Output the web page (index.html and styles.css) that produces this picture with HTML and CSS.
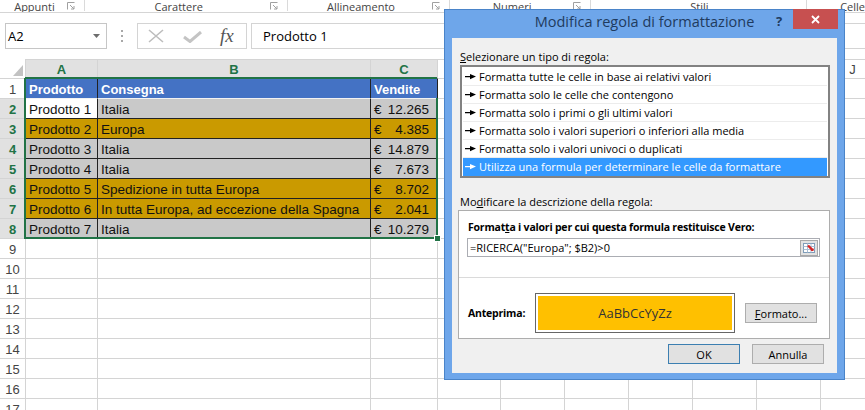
FILE: index.html
```html
<!DOCTYPE html>
<html lang="it">
<head>
<meta charset="utf-8">
<title>Modifica regola di formattazione</title>
<link rel="stylesheet" href="styles.css">
</head>
<body>
<div class="app">
  <div class="ribbon">
    <div class="grp g1"><span class="lbl">Appunti</span><svg class="launch" width="8" height="8" viewBox="0 0 8 8"><path d="M0.5 7.5V0.5H7.5" stroke="#a0a0a0" fill="none"/><path d="M3 3L7 7M7 4V7H4" stroke="#a0a0a0" fill="none"/></svg></div>
    <div class="grp g2"><span class="lbl">Carattere</span><svg class="launch" width="8" height="8" viewBox="0 0 8 8"><path d="M0.5 7.5V0.5H7.5" stroke="#a0a0a0" fill="none"/><path d="M3 3L7 7M7 4V7H4" stroke="#a0a0a0" fill="none"/></svg></div>
    <div class="grp g3"><span class="lbl">Allineamento</span><svg class="launch" width="8" height="8" viewBox="0 0 8 8"><path d="M0.5 7.5V0.5H7.5" stroke="#a0a0a0" fill="none"/><path d="M3 3L7 7M7 4V7H4" stroke="#a0a0a0" fill="none"/></svg></div>
    <div class="grp g4"><span class="lbl">Numeri</span><svg class="launch" width="8" height="8" viewBox="0 0 8 8"><path d="M0.5 7.5V0.5H7.5" stroke="#a0a0a0" fill="none"/><path d="M3 3L7 7M7 4V7H4" stroke="#a0a0a0" fill="none"/></svg></div>
    <div class="grp g5"><span class="lbl">Stili</span></div>
    <div class="grp g6"><span class="lbl">Celle</span></div>
  </div>

  <div class="fbar">
    <div class="namebox"><span>A2</span><svg width="7" height="4" viewBox="0 0 7 4"><path d="M0 0h7L3.5 4z" fill="#6d6d6d"/></svg></div>
    <div class="dots"><i></i><i></i><i></i></div>
    <div class="fxbox">
      <svg class="ico-x" width="18" height="14" viewBox="0 0 18 14"><path d="M2 1L16 13M16 1L2 13" stroke="#bdbdbd" stroke-width="1.6"/></svg>
      <svg class="ico-ok" width="19" height="12" viewBox="0 0 19 12"><path d="M1 6L7 10.5L18 1" stroke="#c4c4c4" stroke-width="3" fill="none"/></svg>
      <span class="fx">fx</span>
    </div>
    <div class="finput">Prodotto 1</div>
  </div>

  <div class="sheet">
    <div class="grid">
      <div class="corner"><svg width="10" height="11" viewBox="0 0 10 11"><path d="M10 0V11H0z" fill="#c2c2c2"/></svg></div>
      <b class="ch s">A</b><b class="ch s">B</b><b class="ch s">C</b><b class="ch"></b><b class="ch"></b><b class="ch"></b><b class="ch"></b><b class="ch"></b><b class="ch"></b><b class="ch">J</b>

      <b class="rh">1</b><div class="t hd a">Prodotto</div><div class="t hd b">Consegna</div><div class="t hd cc">Vendite</div><i class="tr"></i><i></i><i></i><i></i><i></i><i></i><i></i>

      <b class="rh s">2</b><div class="t a act r2">Prodotto 1</div><div class="t b gr r2">Italia</div><div class="t cc gr r2"><span>€</span><span>12.265</span></div><i class="tr"></i><i></i><i></i><i></i><i></i><i></i><i></i>
      <b class="rh s">3</b><div class="t a or">Prodotto 2</div><div class="t b or">Europa</div><div class="t cc or"><span>€</span><span>4.385</span></div><i class="tr"></i><i></i><i></i><i></i><i></i><i></i><i></i>
      <b class="rh s">4</b><div class="t a gr">Prodotto 3</div><div class="t b gr">Italia</div><div class="t cc gr"><span>€</span><span>14.879</span></div><i class="tr"></i><i></i><i></i><i></i><i></i><i></i><i></i>
      <b class="rh s">5</b><div class="t a gr">Prodotto 4</div><div class="t b gr">Italia</div><div class="t cc gr"><span>€</span><span>7.673</span></div><i class="tr"></i><i></i><i></i><i></i><i></i><i></i><i></i>
      <b class="rh s">6</b><div class="t a or">Prodotto 5</div><div class="t b or">Spedizione in tutta Europa</div><div class="t cc or"><span>€</span><span>8.702</span></div><i class="tr"></i><i></i><i></i><i></i><i></i><i></i><i></i>
      <b class="rh s">7</b><div class="t a or">Prodotto 6</div><div class="t b or">In tutta Europa, ad eccezione della Spagna</div><div class="t cc or"><span>€</span><span>2.041</span></div><i class="tr"></i><i></i><i></i><i></i><i></i><i></i><i></i>
      <b class="rh s">8</b><div class="t a gr">Prodotto 7</div><div class="t b gr">Italia</div><div class="t cc gr"><span>€</span><span>10.279</span></div><i class="tr"></i><i></i><i></i><i></i><i></i><i></i><i></i>

      <b class="rh">9</b><i></i><i></i><i></i><i></i><i></i><i></i><i></i><i></i><i></i><i></i>
      <b class="rh">10</b><i></i><i></i><i></i><i></i><i></i><i></i><i></i><i></i><i></i><i></i>
      <b class="rh">11</b><i></i><i></i><i></i><i></i><i></i><i></i><i></i><i></i><i></i><i></i>
      <b class="rh">12</b><i></i><i></i><i></i><i></i><i></i><i></i><i></i><i></i><i></i><i></i>
      <b class="rh">13</b><i></i><i></i><i></i><i></i><i></i><i></i><i></i><i></i><i></i><i></i>
      <b class="rh">14</b><i></i><i></i><i></i><i></i><i></i><i></i><i></i><i></i><i></i><i></i>
      <b class="rh">15</b><i></i><i></i><i></i><i></i><i></i><i></i><i></i><i></i><i></i><i></i>
      <b class="rh">16</b><i></i><i></i><i></i><i></i><i></i><i></i><i></i><i></i><i></i><i></i>
      <b class="rh">17</b><i></i><i></i><i></i><i></i><i></i><i></i><i></i><i></i><i></i><i></i>
    </div>
    <div class="colsel"></div>
    <div class="sel"></div>
    <div class="selr"></div>
    <div class="handle"></div>
  </div>

  <div class="dialog">
    <div class="titlebar">Modifica regola di formattazione</div>
    <span class="help">?</span>
    <span class="close"><svg width="9" height="9" viewBox="0 0 9 9"><path d="M1 1L8 8M8 1L1 8" stroke="#fff" stroke-width="1.8"/></svg></span>
    <div class="body">
      <div class="lbl"><u>S</u>elezionare un tipo di regola:</div>
      <div class="list">
        <div class="item"><svg class="arr" width="11" height="7" viewBox="0 0 11 7"><path d="M0 3h6v1.2H0z M5 1L11 3.6L5 6.2z" fill="currentColor"/></svg>Formatta tutte le celle in base ai relativi valori</div>
        <div class="item"><svg class="arr" width="11" height="7" viewBox="0 0 11 7"><path d="M0 3h6v1.2H0z M5 1L11 3.6L5 6.2z" fill="currentColor"/></svg>Formatta solo le celle che contengono</div>
        <div class="item"><svg class="arr" width="11" height="7" viewBox="0 0 11 7"><path d="M0 3h6v1.2H0z M5 1L11 3.6L5 6.2z" fill="currentColor"/></svg>Formatta solo i primi o gli ultimi valori</div>
        <div class="item"><svg class="arr" width="11" height="7" viewBox="0 0 11 7"><path d="M0 3h6v1.2H0z M5 1L11 3.6L5 6.2z" fill="currentColor"/></svg>Formatta solo i valori superiori o inferiori alla media</div>
        <div class="item"><svg class="arr" width="11" height="7" viewBox="0 0 11 7"><path d="M0 3h6v1.2H0z M5 1L11 3.6L5 6.2z" fill="currentColor"/></svg>Formatta solo i valori univoci o duplicati</div>
        <div class="item on"><svg class="arr" width="11" height="7" viewBox="0 0 11 7"><path d="M0 3h6v1.2H0z M5 1L11 3.6L5 6.2z" fill="currentColor"/></svg>Utilizza una formula per determinare le celle da formattare</div>
      </div>
      <div class="lbl lbl2">Mo<u>d</u>ificare la descrizione della regola:</div>
      <div class="desc">
        <div class="desc-top">
          <div class="blbl">Format<u>t</u>a i valori per cui questa formula restituisce Vero:</div>
          <div class="finp"><span>=RICERCA("Europa"; $B2)&gt;0</span>
            <svg class="refbtn" width="18" height="16" viewBox="0 0 18 16"><rect x="0.5" y="0.5" width="17" height="15" fill="#e2e2e2" stroke="#a9a9a9"/><rect x="3.5" y="3.5" width="11" height="9" fill="#fff" stroke="#7f9db9"/><path d="M3.5 6.5h11M3.5 9.5h11M7.5 3.5v9M11 3.5v9" stroke="#a9bdd3"/><path d="M8 5.5L13 10.5" stroke="#d42424" stroke-width="2.4"/><path d="M13.5 11L10.5 10.8L13.3 8z" fill="#d42424"/></svg>
          </div>
        </div>
        <div class="desc-bot">
          <div class="prow">
            <span class="blbl alabel">Anteprima:</span>
            <div class="preview">AaBbCcYyZz</div>
            <div class="btn fmt"><span><u>F</u>ormato...</span></div>
          </div>
        </div>
      </div>
      <div class="btns"><div class="btn ok">OK</div><div class="btn">Annulla</div></div>
    </div>
  </div>
</div>
</body>
</html>
```

FILE: styles.css
```css
* { box-sizing: border-box; }
html, body { margin: 0; padding: 0; }
body {
  width: 865px;
  height: 410px;
  overflow: hidden;
  background: #fff;
  font-family: "Open Sans", "Liberation Sans", sans-serif;
}
.app { position: relative; width: 865px; height: 410px; overflow: hidden; }

/* ribbon group labels */
.ribbon {
  display: flex;
  height: 13px;
  border-bottom: 1px solid #d5d5d5;
  font-size: 11px;
  line-height: 11px;
  color: #444;
  overflow: hidden;
}
.grp { display: flex; height: 11px; border-right: 1px solid #dadada; }
.grp .lbl { flex: 1; text-align: center; margin-top: -1px; white-space: nowrap; }
.grp .launch { flex: none; margin: 2px 9px 0 0; }
.g1 { width: 86px; }
.g2 { width: 206px; }
.g3 { width: 163px; }
.g4 { width: 143px; }
.g5 { width: 219px; }
.g6 { flex: 1; border-right: none; }
.g6 .lbl { text-align: left; padding-left: 31px; }

/* formula bar */
.fbar { display: flex; height: 26px; margin-top: 10px; }
.namebox {
  margin-left: 5px;
  width: 102px;
  border: 1px solid #c6c6c6;
  display: flex;
  align-items: center;
  justify-content: space-between;
  padding: 0 6px 0 2px;
  font-size: 13px;
  color: #000;
}
.dots { width: 30px; display: flex; flex-direction: column; align-items: center; justify-content: center; gap: 3px; }
.dots i { width: 2px; height: 2px; background: #a8a8a8; }
.fxbox {
  width: 110px;
  border: 1px solid #d4d4d4;
  display: flex;
  align-items: center;
  padding-left: 9px;
}
.ico-ok { margin-left: 18px; margin-top: 2px; }
.fx {
  margin-left: 18px;
  font-family: "Liberation Serif", serif;
  font-style: italic;
  font-size: 19px;
  color: #555;
  line-height: 20px;
}
.finput {
  margin-left: 4px;
  flex: 1;
  border: 1px solid #d4d4d4;
  border-right: none;
  padding-left: 11px;
  display: flex;
  align-items: center;
  font-size: 13px;
  color: #000;
}

/* sheet */
.sheet { position: relative; margin-top: 10px; }
.grid {
  display: grid;
  grid-template-columns: 25px 72px 273px 67px 63px 64px 64px 64px 64px 64px 64px;
  grid-template-rows: 19px;
  grid-auto-rows: 20px;
  font-family: "Liberation Sans", Arial, sans-serif;
}
.grid > * {
  border-left: 1px solid #d4d4d4;
  border-top: 1px solid #d4d4d4;
  min-width: 0;
  overflow: hidden;
  white-space: nowrap;
}
.corner {
  border-left: none !important;
  border-top-color: transparent !important;
  display: flex;
  align-items: flex-end;
  justify-content: flex-end;
  padding: 0 2px 2px 0;
}
.ch, .rh {
  display: flex;
  align-items: center;
  justify-content: center;
  font-size: 13px;
  font-weight: normal;
  color: #444;
  background: #fff;
}
.rh { border-left: none !important; padding-top: 1px; }
.ch.s, .rh.s { background: #e1e1e1; color: #217346; font-weight: bold; }

.t {
  display: flex;
  align-items: center;
  padding: 1px 3px 0;
  font-size: 13.5px;
  color: #111;
  border-top-color: #222 !important;
}
.t.b, .t.cc { border-left-color: #222; }
.t.cc { justify-content: space-between; padding-right: 8px; }
.tr { border-left-color: #222 !important; }
.hd { background: #4472c4; color: #fff; font-weight: bold; font-size: 13px; }
.r2 { border-top-color: #f2f2f2 !important; }
.gr { background: #c9c9c9; }
.or { background: #ca9a00; }
.act { background: #fff; }

.colsel { position: absolute; left: 25px; top: 18px; width: 412px; height: 2px; background: #217346; }
.sel {
  position: absolute;
  left: 24px;
  top: 19px;
  width: 414px;
  height: 161px;
  border-left: 2px solid #217346;
  border-bottom: 2px solid #217346;
}
.selr { position: absolute; left: 436px; top: 39px; width: 2px; height: 141px; background: #217346; }
.handle {
  position: absolute;
  left: 434px;
  top: 176px;
  width: 7px;
  height: 7px;
  background: #217346;
  border: 1px solid #fff;
}

/* dialog */
.dialog {
  position: absolute;
  left: 444px;
  top: 9px;
  width: 401px;
  height: 371px;
  border: 1px solid #4a84c9;
  background: #6ea6ea;
  padding: 0 7px 6px;
  display: flex;
  flex-direction: column;
  font-family: "Open Sans", "Liberation Sans", sans-serif;
  font-size: 11px;
  color: #000;
}
.titlebar {
  height: 28px;
  line-height: 24px;
  text-align: center;
  font-size: 14.5px;
  color: #1f3b5e;
  white-space: nowrap;
}
.help {
  position: absolute;
  left: 328px;
  top: 4px;
  width: 12px;
  text-align: center;
  font-size: 13px;
  line-height: 14px;
  font-weight: bold;
  color: #1f3b5e;
}
.close {
  position: absolute;
  left: 348px;
  top: -1px;
  width: 45px;
  height: 20px;
  background: #c75050;
  display: flex;
  align-items: center;
  justify-content: center;
}
.body {
  flex: 1;
  background: #f0f0f0;
  padding: 11px 7px 0 6px;
  display: flex;
  flex-direction: column;
}
.lbl { line-height: 16px; margin-left: 2px; white-space: nowrap; }
.lbl2 { margin-top: 16px; }
.list {
  margin-left: 2px;
  border: 2px solid #828282;
  background: #fff;
  padding: 1px 1px 0;
}
.item {
  height: 18px;
  line-height: 17px;
  border-bottom: 1px solid #ececec;
  display: flex;
  align-items: center;
  padding-left: 2px;
  white-space: nowrap;
}
.item .arr { flex: none; margin-right: 3px; }
.item.on { background: #3399ff; color: #fff; border-bottom-color: #3399ff; }

.desc {
  height: 129px;
  border: 1px solid #adadad;
  background: #fff;
  display: flex;
  flex-direction: column;
}
.desc-top {
  height: 67px;
  padding: 8px 9px 0 8px;
  border-bottom: 1px solid #dadada;
}
.blbl {
  font-weight: bold;
  font-size: 10.5px;
  letter-spacing: -0.2px;
  line-height: 16px;
  margin-left: 1px;
  white-space: nowrap;
}
.finp {
  margin-top: 3px;
  height: 19px;
  border: 1px solid #abadb3;
  background: #fff;
  display: flex;
  align-items: center;
  justify-content: space-between;
  padding: 0 1px 0 2px;
}
.refbtn { flex: none; }
.desc-bot { padding: 15px 0 0 8px; }
.prow { display: flex; align-items: center; height: 40px; }
.alabel { width: 67px; flex: none; }
.preview {
  width: 200px;
  height: 40px;
  border: 1px solid #666;
  background: #ffc000;
  box-shadow: inset 0 0 0 2px #fff;
  display: flex;
  align-items: center;
  justify-content: center;
  font-size: 13px;
  color: #333;
}
.btn {
  border: 1px solid #adadad;
  background: #e1e1e1;
  display: flex;
  align-items: center;
  justify-content: center;
  height: 20px;
}
.fmt { margin-left: 10px; width: 72px; }
.btns { display: flex; justify-content: flex-end; gap: 12px; margin-top: 5px; padding-right: 6px; }
.btns .btn { width: 72px; }
.ok { border-color: #3c7fb1; }
```
